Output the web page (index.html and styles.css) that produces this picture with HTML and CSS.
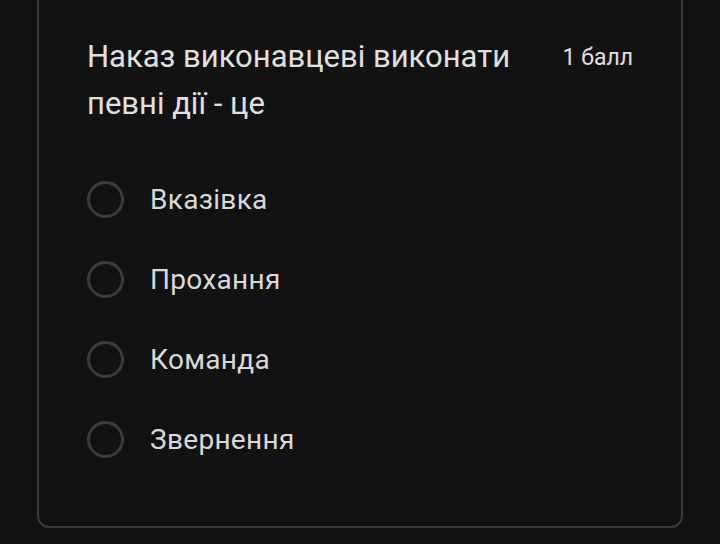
FILE: index.html
```html
<!DOCTYPE html>
<html lang="uk">
<head>
<meta charset="utf-8">
<link rel="stylesheet" href="styles.css">
</head>
<body>
<div class="page">
  <div class="card">
    <div class="head">
      <div class="title">Наказ виконавцеві виконати певні дії - це</div>
      <div class="points">1 балл</div>
    </div>
    <div class="options">
      <label class="opt"><span class="radio"></span><span class="label">Вказівка</span></label>
      <label class="opt"><span class="radio"></span><span class="label">Прохання</span></label>
      <label class="opt"><span class="radio"></span><span class="label">Команда</span></label>
      <label class="opt"><span class="radio"></span><span class="label">Звернення</span></label>
    </div>
  </div>
</div>
</body>
</html>
```
FILE: styles.css
```css
html, body {
  margin: 0;
  padding: 0;
  background: #121212;
  width: 720px;
  height: 544px;
  overflow: hidden;
  font-family: Roboto, "Noto Sans", sans-serif;
}
.page {
  padding: 0 37px 0 37px;
}
.card {
  margin-top: -20px;
  height: 548px;
  box-sizing: border-box;
  border: 2px solid #3a3a3a;
  border-radius: 0 0 12px 12px;
  padding: 51px 48px 0 48px;
}
.head {
  display: flex;
  justify-content: space-between;
  align-items: flex-start;
}
.title {
  width: 440px;
  font-size: 31px;
  line-height: 47px;
  color: #e0e0e0;
}
.points {
  font-size: 23px;
  line-height: 30px;
  color: #e0e0e0;
  padding-top: 10px;
}
.options {
  display: flex;
  flex-direction: column;
  gap: 42px;
  padding-top: 53px;
}
.opt {
  display: flex;
  align-items: center;
  height: 38px;
}
.radio {
  width: 31px;
  height: 31px;
  border: 3px solid #3b3b3b;
  border-radius: 50%;
  margin-right: 26px;
}
.label {
  font-size: 28px;
  color: #d9d9d9;
  letter-spacing: 0.3px;
}
```
